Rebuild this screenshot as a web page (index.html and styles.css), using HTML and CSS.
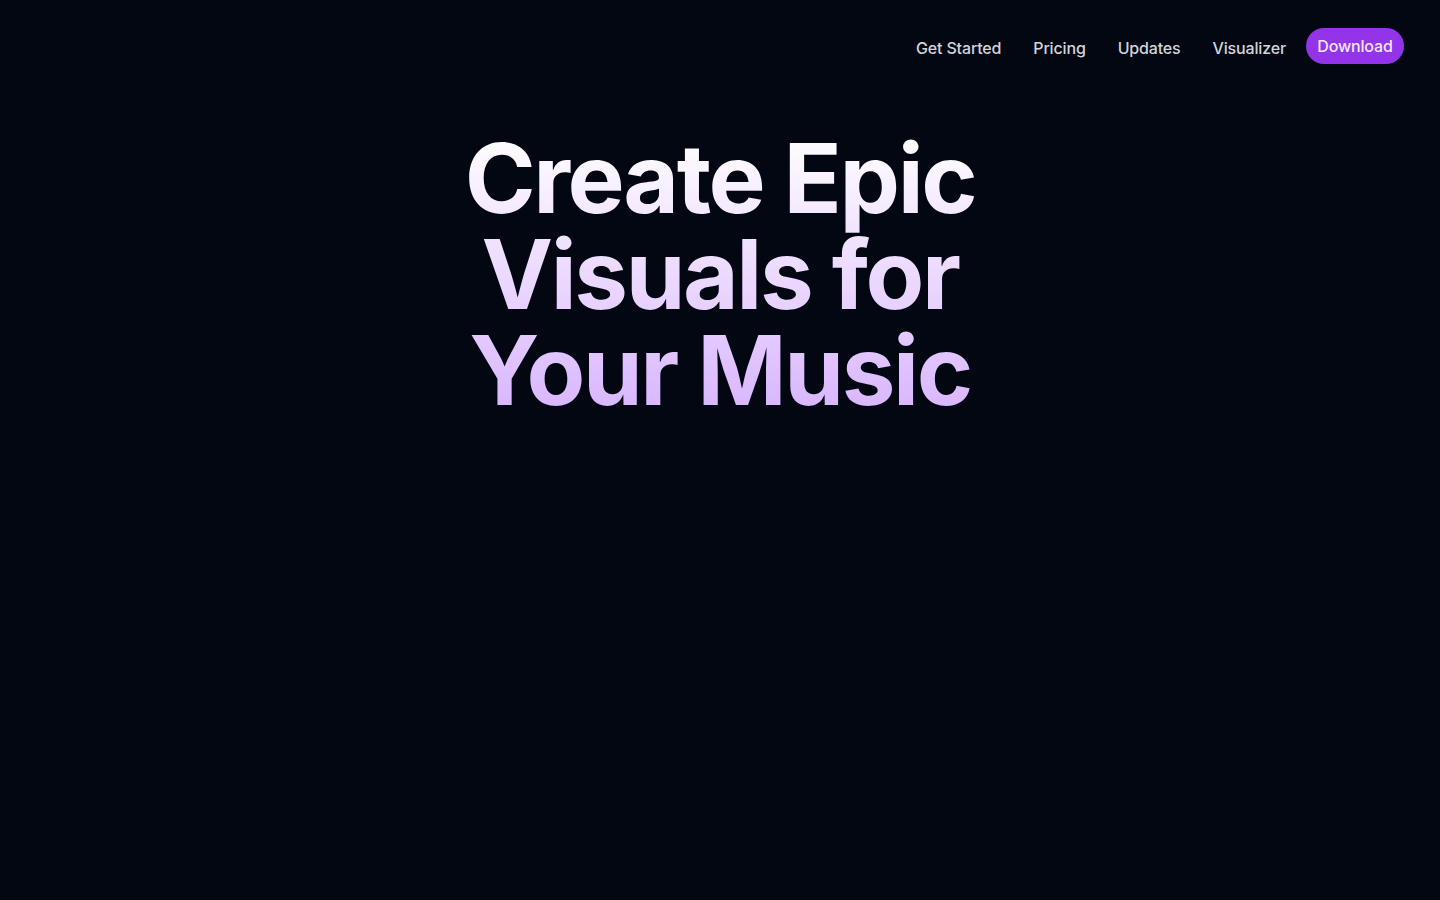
FILE: index.html
```html
<!DOCTYPE html>
<html lang="en">
<head>
<meta charset="utf-8">
<title>Create Epic Visuals for Your Music</title>
<link rel="stylesheet" href="styles.css">
</head>
<body>
<header class="topbar">
  <nav class="nav">
    <a class="nav-link" href="#">Get Started</a>
    <a class="nav-link" href="#">Pricing</a>
    <a class="nav-link" href="#">Updates</a>
    <a class="nav-link" href="#">Visualizer</a>
    <a class="nav-button" href="#">Download</a>
  </nav>
</header>
<main class="hero">
  <h1 class="hero-title">Create Epic<br>Visuals for<br>Your Music</h1>
</main>
</body>
</html>
```

FILE: styles.css
```css
* { box-sizing: border-box; }
html, body {
  margin: 0;
  padding: 0;
  background: #030712;
  min-height: 100vh;
  font-family: Inter, "Noto Sans", "Liberation Sans", sans-serif;
}
.topbar {
  display: flex;
  justify-content: flex-end;
  padding: 28px 36px 0 0;
}
.nav {
  display: flex;
  align-items: center;
  gap: 32px;
}
.nav-link {
  color: #d1d5db;
  text-decoration: none;
  font-size: 16px;
  font-weight: 500;
  line-height: 24px;
  letter-spacing: -0.01em;
  padding-top: 4px;
}
.nav-button {
  margin-left: -12px;
  display: flex;
  align-items: center;
  justify-content: center;
  width: 98px;
  height: 36px;
  border-radius: 18px;
  background: #9333ea;
  color: #f3e8ff;
  text-decoration: none;
  font-size: 16px;
  font-weight: 500;
  letter-spacing: -0.01em;
  padding-bottom: 1px;
}
.hero {
  display: flex;
  justify-content: center;
  padding-top: 66px;
}
.hero-title {
  margin: 0;
  text-align: center;
  font-size: 96px;
  line-height: 96px;
  font-weight: 700;
  letter-spacing: -0.025em;
  background: linear-gradient(to bottom, #ffffff 0%, #d8b4fe 100%);
  -webkit-background-clip: text;
  background-clip: text;
  color: transparent;
}
```
